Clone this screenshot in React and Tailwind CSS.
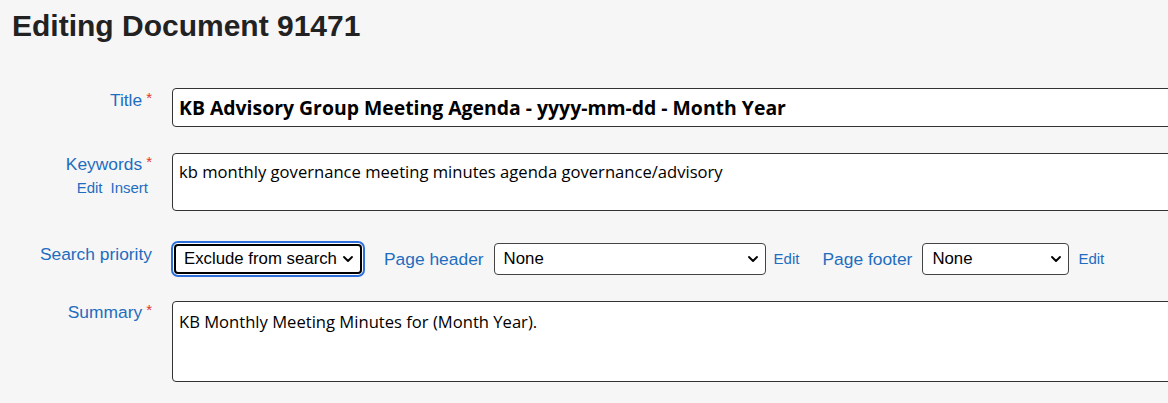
import { ChevronDown } from 'lucide-react'

const LABEL = "text-[#1e6dbf] text-[17.4px] font-['Liberation_Sans',Arial,sans-serif]"
const FIELD = "font-['Open_Sans',sans-serif] text-[16.6px] text-black"
const LINK = "text-[15px] text-[#1e6dbf] font-['Liberation_Sans',Arial,sans-serif]"

function Req() {
  return <span className="text-[#e0342b] text-[15px] ml-1 relative -top-[3px]">*</span>
}

function Select({ value, width, focused }) {
  return (
    <div
      className={`flex items-center justify-between bg-white border border-[#444] rounded-[4px] pr-[4px] text-[16.8px] text-black font-['Liberation_Sans',Arial,sans-serif] ${width} ${
        focused ? 'h-[30px] pl-[8px] border-2 border-black shadow-[0_0_0_1px_#fff,0_0_0_3px_#2f6fdc]' : 'h-[32px] pl-[9px]'
      }`}
    >
      <span className="whitespace-nowrap">{value}</span>
      <ChevronDown size={16} strokeWidth={2.8} className="text-black shrink-0" />
    </div>
  )
}

export default function App() {
  return (
    <div className="w-[1168px] h-[403px] overflow-hidden bg-[#f6f6f6]">
      <h1 className="pl-[12px] pt-[6px] text-[30px] leading-[40px] font-bold text-[#222] font-['Liberation_Sans',Arial,sans-serif]">
        Editing Document 91471
      </h1>

      <div className="mt-[42px] flex">
        <div className={`w-[152px] shrink-0 text-right -mt-[1px] ${LABEL}`}>
          Title<Req />
        </div>
        <div className="ml-[20px] w-[1020px] shrink-0 h-[39px] bg-white border border-[#333] rounded-[4px] px-[6px] flex items-center font-['Open_Sans',sans-serif] text-[19.4px] font-bold text-black">
          KB Advisory Group Meeting Agenda - yyyy-mm-dd - Month Year
        </div>
      </div>

      <div className="mt-[26px] flex">
        <div className="w-[152px] shrink-0 text-right -mt-[2px]">
          <div className={LABEL}>Keywords<Req /></div>
          <div className={`flex justify-end gap-[8px] pr-[4px] ${LINK}`}>
            <span>Edit</span>
            <span>Insert</span>
          </div>
        </div>
        <div className={`ml-[20px] w-[1020px] shrink-0 h-[58px] bg-white border border-[#333] rounded-[4px] px-[6px] pt-[6px] ${FIELD}`}>
          kb monthly governance meeting minutes agenda governance/advisory
        </div>
      </div>

      <div className="mt-[32px] flex items-center">
        <div className={`w-[152px] shrink-0 text-right -mt-[9px] ${LABEL}`}>Search priority</div>
        <div className="ml-[22px]">
          <Select value="Exclude from search" width="w-[188px]" focused />
        </div>
        <div className={`ml-[22px] ${LABEL}`}>Page header</div>
        <div className="ml-[10px]">
          <Select value="None" width="w-[272px]" />
        </div>
        <span className={`ml-[8px] ${LINK}`}>Edit</span>
        <div className={`ml-[23px] ${LABEL}`}>Page footer</div>
        <div className="ml-[10px]">
          <Select value="None" width="w-[147px]" />
        </div>
        <span className={`ml-[9px] ${LINK}`}>Edit</span>
      </div>

      <div className="mt-[26px] flex">
        <div className={`w-[152px] shrink-0 text-right -mt-[2px] ${LABEL}`}>
          Summary<Req />
        </div>
        <div className={`ml-[20px] w-[1020px] shrink-0 h-[81px] bg-white border border-[#333] rounded-[4px] px-[6px] pt-[8px] ${FIELD}`}>
          KB Monthly Meeting Minutes for (Month Year).
        </div>
      </div>
    </div>
  )
}
